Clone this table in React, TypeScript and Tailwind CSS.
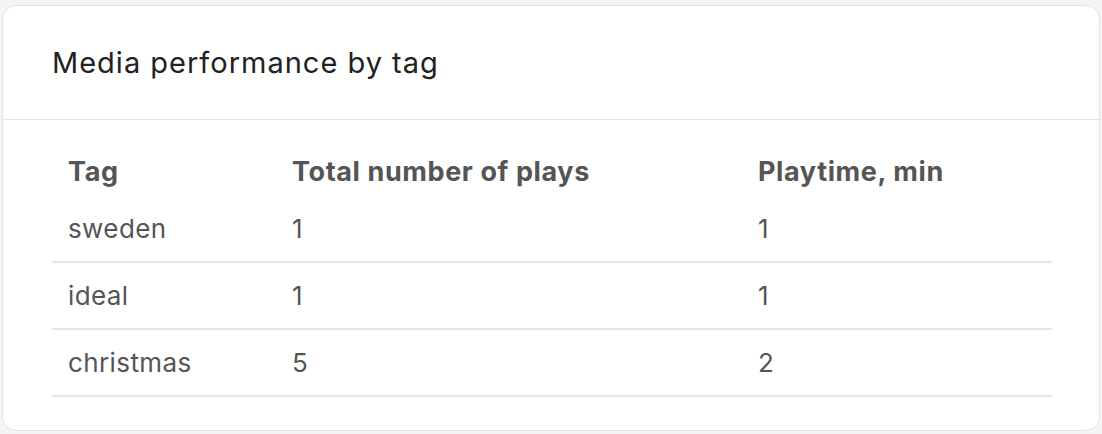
import React from "react";

const rows = [
  { tag: "sweden", plays: "1", time: "1" },
  { tag: "ideal", plays: "1", time: "1" },
  { tag: "christmas", plays: "5", time: "2" },
];

export default function App() {
  return (
    <div
      className="w-[1102px] h-[434px] bg-[#f5f5f7] pt-[5px] px-[2px] pb-[3px]"
      style={{ fontFamily: "Inter, 'Noto Sans', sans-serif" }}
    >
      <div className="h-full bg-white border border-[#e3e3e3] rounded-[14px] flex flex-col">
        <div className="h-[114px] border-b border-[#e3e3e3] flex items-center pl-[49px]">
          <h2 className="text-[29px] text-[#222222] font-normal tracking-[1px] leading-none">
            Media performance by tag
          </h2>
        </div>
        <div className="px-[49px] pt-[29px]">
          <table className="w-[1000px] border-collapse text-[#555555]">
            <thead>
              <tr className="h-[46px]">
                <th className="w-[224px] text-left pl-[16px] font-bold text-[27px] tracking-[0.6px] align-middle">Tag</th>
                <th className="w-[466px] text-left pl-[16px] font-bold text-[27px] tracking-[0.6px] align-middle">Total number of plays</th>
                <th className="text-left pl-[16px] font-bold text-[27px] tracking-[0.6px] align-middle">Playtime, min</th>
              </tr>
            </thead>
            <tbody>
              {rows.map((r) => (
                <tr key={r.tag} className="h-[67px] border-b-2 border-[#e6e6e6]">
                  <td className="pl-[16px] text-[26px] tracking-[0.4px] align-middle">{r.tag}</td>
                  <td className="pl-[16px] text-[26px] tracking-[0.4px] align-middle">{r.plays}</td>
                  <td className="pl-[16px] text-[26px] tracking-[0.4px] align-middle">{r.time}</td>
                </tr>
              ))}
            </tbody>
          </table>
        </div>
      </div>
    </div>
  );
}
